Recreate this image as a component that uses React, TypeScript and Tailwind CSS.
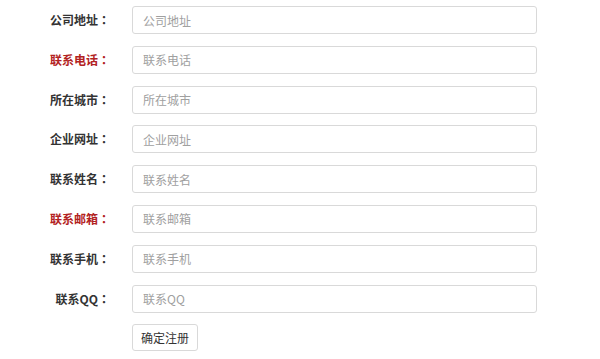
const fields = [
  { label: "公司地址", required: false },
  { label: "联系电话", required: true },
  { label: "所在城市", required: false },
  { label: "企业网址", required: false },
  { label: "联系姓名", required: false },
  { label: "联系邮箱", required: true },
  { label: "联系手机", required: false },
  { label: "联系QQ", required: false },
];

export default function App() {
  return (
    <div
      className="w-[600px] h-[359px] bg-white overflow-hidden"
      style={{ fontFamily: '"Microsoft YaHei", "Noto Sans CJK SC", sans-serif' }}
    >
      <form className="flex flex-col gap-[11.8px] pt-[6px]">
        {fields.map((f) => (
          <div key={f.label} className="flex items-center h-[28px]">
            <label
              className={`w-[110px] text-right text-[12px] font-bold ${
                f.required ? "text-[#b22222]" : "text-[#333333]"
              }`}
            >
              {f.label}
              <span className="font-['Noto_Sans_CJK_JP',sans-serif]">：</span>
            </label>
            <input
              type="text"
              placeholder={f.label}
              className="ml-[22px] w-[405px] h-full rounded-[3px] border border-[#d9d9d9] px-[10px] text-[12px] text-[#555] placeholder:text-[#a0a0a0] outline-none"
            />
          </div>
        ))}
        <div className="flex pl-[132px]">
          <button
            type="button"
            className="h-[27px] w-[66px] rounded-[3px] border border-[#d9d9d9] bg-white text-[12px] text-[#333]"
          >
            确定注册
          </button>
        </div>
      </form>
    </div>
  );
}
